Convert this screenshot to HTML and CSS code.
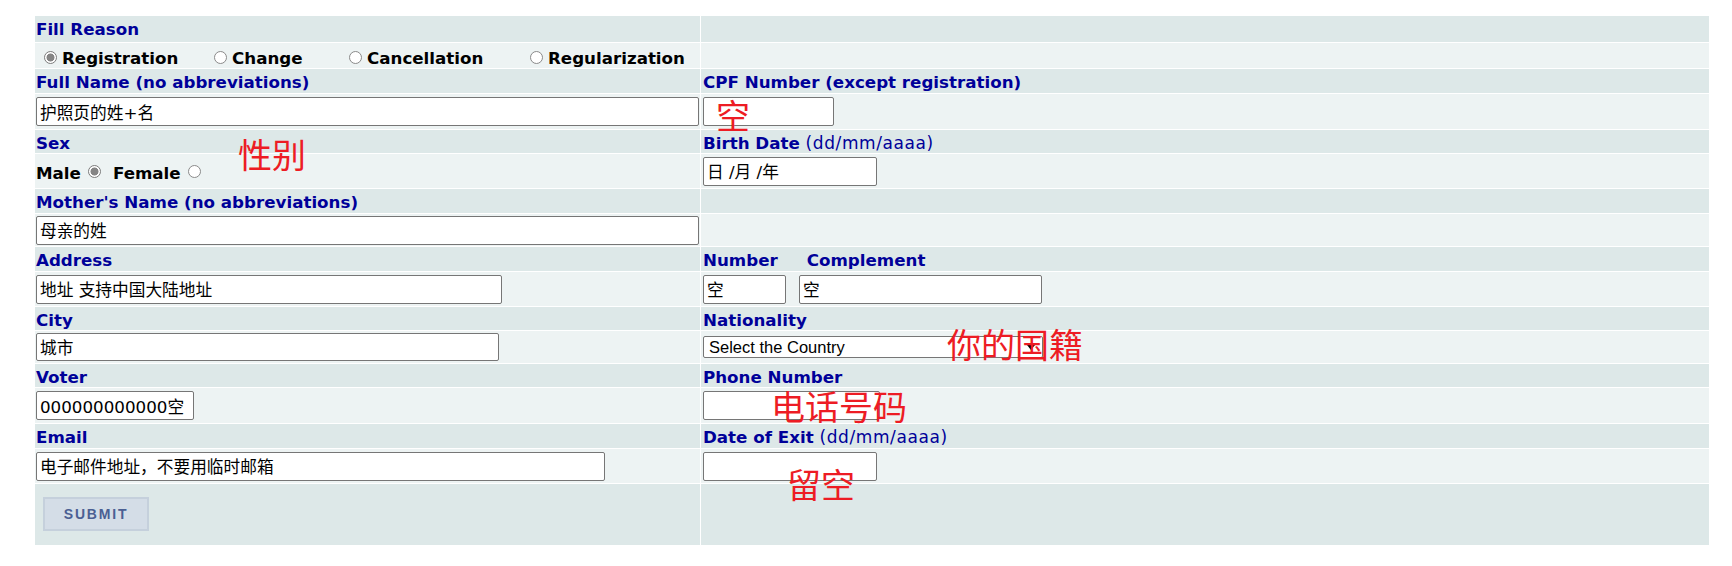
FILE: index.html
```html
<!DOCTYPE html>
<html lang="en">
<head>
<meta charset="utf-8">
<title>Registration Form</title>
<link rel="stylesheet" href="styles.css">
</head>
<body>
<div class="page">
  <form class="sheet">
    <div class="grid">
      <div class="cell lbl">Fill Reason</div>
      <div class="cell lbl"></div>

      <div class="cell light reasons">
        <label class="opt"><input class="radio" type="radio" name="reason" checked><span>Registration</span></label>
        <label class="opt"><input class="radio" type="radio" name="reason"><span>Change</span></label>
        <label class="opt"><input class="radio" type="radio" name="reason"><span>Cancellation</span></label>
        <label class="opt"><input class="radio" type="radio" name="reason"><span>Regularization</span></label>
      </div>
      <div class="cell light"></div>

      <div class="cell lbl">Full Name (no abbreviations)</div>
      <div class="cell lbl">CPF Number (except registration)</div>

      <div class="cell light field"><input class="inp w-full" type="text" value="护照页的姓+名"></div>
      <div class="cell light field"><input class="inp w-cpf" type="text" value=""></div>

      <div class="cell lbl">Sex</div>
      <div class="cell lbl">Birth Date <span class="hint">(dd/mm/aaaa)</span></div>

      <div class="cell light sex">
        <span class="sex-txt">Male</span><input class="radio sex-radio" type="radio" name="sex" checked><span class="sex-txt sex-f">Female</span><input class="radio sex-radio" type="radio" name="sex">
      </div>
      <div class="cell light field"><input class="inp w-date" type="text" value="日 /月 /年"></div>

      <div class="cell lbl">Mother's Name (no abbreviations)</div>
      <div class="cell lbl"></div>

      <div class="cell light field"><input class="inp w-full" type="text" value="母亲的姓"></div>
      <div class="cell light"></div>

      <div class="cell lbl">Address</div>
      <div class="cell lbl"><span>Number</span><span class="compl">Complement</span></div>

      <div class="cell light field"><input class="inp w-addr" type="text" value="地址 支持中国大陆地址"></div>
      <div class="cell light field"><input class="inp w-num" type="text" value="空"><input class="inp w-compl" type="text" value="空"></div>

      <div class="cell lbl">City</div>
      <div class="cell lbl">Nationality</div>

      <div class="cell light field"><input class="inp inp-short w-city" type="text" value="城市"></div>
      <div class="cell light field">
        <span class="select-wrap"><select class="sel"><option>Select the Country</option></select></span>
      </div>

      <div class="cell lbl">Voter</div>
      <div class="cell lbl">Phone Number</div>

      <div class="cell light field"><input class="inp w-voter" type="text" value="000000000000空"></div>
      <div class="cell light field"><input class="inp w-phone" type="text" value=""></div>

      <div class="cell lbl">Email</div>
      <div class="cell lbl">Date of Exit <span class="hint">(dd/mm/aaaa)</span></div>

      <div class="cell light field"><input class="inp w-email" type="text" value="电子邮件地址，不要用临时邮箱"></div>
      <div class="cell light field"><input class="inp w-date" type="text" value=""></div>

      <div class="cell dark submit-cell"><button class="submit" type="button">SUBMIT</button></div>
      <div class="cell dark"></div>
    </div>

    <span class="note note-cpf">空</span>
    <span class="note note-sex">性别</span>
    <span class="note note-nat">你的国籍</span>
    <span class="note note-phone">电话号码</span>
    <span class="note note-exit">留空</span>
  </form>
</div>
</body>
</html>
```

FILE: styles.css
```css
html, body {
  background: #ffffff;
}

body {
  margin: 8px;
  font-family: "DejaVu Sans", "Noto Sans CJK SC", sans-serif;
}

.page {
  padding: 8px 0 0 27px;
}

.sheet {
  position: relative;
  width: 1674px;
  margin: 0;
}

.grid {
  display: grid;
  grid-template-columns: 665px 1008px;
  grid-template-rows: 26px 25px 24px 35px 23px 34px 24px 32px 24px 34px 23px 32px 23px 35px 24px 34px 61px;
  gap: 1px;
  background: #ffffff;
}

.cell {
  box-sizing: border-box;
  padding: 0 1px;
  min-width: 0;
}

.cell:nth-child(even) {
  padding-left: 2px;
}

.lbl {
  background: #dde8e8;
  color: #000099;
  font-weight: bold;
  font-size: 16.7px;
  line-height: 20px;
  padding-top: 3px;
  white-space: nowrap;
}

.hint {
  font-weight: normal;
  font-size: 17px;
  letter-spacing: 0.6px;
}

.compl {
  margin-left: 29px;
}

.light {
  background: #edf3f3;
}

.dark {
  background: #dde8e8;
}

.field {
  display: flex;
  align-items: center;
}

/* Radio buttons */
.radio {
  -webkit-appearance: none;
  appearance: none;
  box-sizing: border-box;
  width: 13px;
  height: 13px;
  margin: 0;
  border: 1px solid #8a8a8a;
  border-radius: 50%;
  background: #ffffff;
  vertical-align: baseline;
}

.radio:checked {
  border-color: #7c7c7c;
  background: radial-gradient(circle at center, #858585 0 3.7px, #ffffff 4.3px);
}

.reasons {
  display: grid;
  grid-template-columns: 170px 135px 181px auto;
  padding-top: 4.5px;
  line-height: 20px;
  font-size: 16.7px;
  font-weight: bold;
  color: #000000;
  white-space: nowrap;
}

.opt .radio {
  margin: 0 5px 0 8px;
}

.sex {
  padding-top: 9px;
  line-height: 20px;
  font-size: 16.7px;
  font-weight: bold;
  color: #000000;
  white-space: nowrap;
}

.sex-radio {
  margin: 0 0 0 7px;
  vertical-align: 1px;
}

.sex-f {
  margin-left: 12px;
}

/* Text inputs */
.inp {
  box-sizing: border-box;
  height: 29px;
  margin: 0;
  padding: 0 3px;
  border: 1px solid #767676;
  border-radius: 2px;
  background: #ffffff;
  color: #000000;
  font-family: "DejaVu Sans", "Noto Sans CJK SC", sans-serif;
  font-size: 16.7px;
  outline: none;
}

.inp-short {
  height: 28px;
}

.w-full { width: 664px; }
.w-cpf { width: 131px; }
.w-date { width: 174px; }
.w-addr { width: 466px; }
.w-num { width: 83px; }
.w-compl { width: 243px; margin-left: 13px; }
.w-city { width: 463px; }
.w-voter { width: 158px; }
.w-phone { width: 177px; }
.w-email { width: 569px; }

/* Select */
.select-wrap {
  position: relative;
  display: inline-block;
}

.select-wrap::after {
  content: "";
  position: absolute;
  right: 8px;
  top: 9px;
  border-left: 4px solid transparent;
  border-right: 4px solid transparent;
  border-top: 5px solid #000000;
  pointer-events: none;
}

.sel {
  -webkit-appearance: none;
  appearance: none;
  box-sizing: border-box;
  width: 340px;
  height: 22px;
  margin: 0;
  padding: 0 20px 0 5px;
  border: 1px solid #767676;
  border-radius: 2px;
  background: #ffffff;
  color: #000000;
  font-family: "Liberation Sans", Arial, sans-serif;
  font-size: 16.5px;
  line-height: 20px;
}

/* Submit */
.submit-cell {
  padding-top: 13px;
}

.submit {
  box-sizing: border-box;
  width: 106px;
  height: 34px;
  margin: 0 0 0 7px;
  padding: 0;
  border: 2px solid #c5d0dc;
  background: #d4dde7;
  color: #4b5f93;
  font-family: "Liberation Sans", Arial, sans-serif;
  font-weight: bold;
  font-size: 14px;
  letter-spacing: 1.8px;
}

/* Red annotations overlaid on the screenshot */
.note {
  position: absolute;
  color: #ed1c24;
  font-family: "Noto Sans CJK SC", sans-serif;
  font-size: 34px;
  line-height: 35px;
  font-weight: 400;
  white-space: nowrap;
}

.note-cpf { left: 681px; top: 81px; }
.note-sex { left: 203px; top: 120px; }
.note-nat { left: 912px; top: 310px; }
.note-phone { left: 736px; top: 372px; }
.note-exit { left: 752px; top: 450px; }
```
